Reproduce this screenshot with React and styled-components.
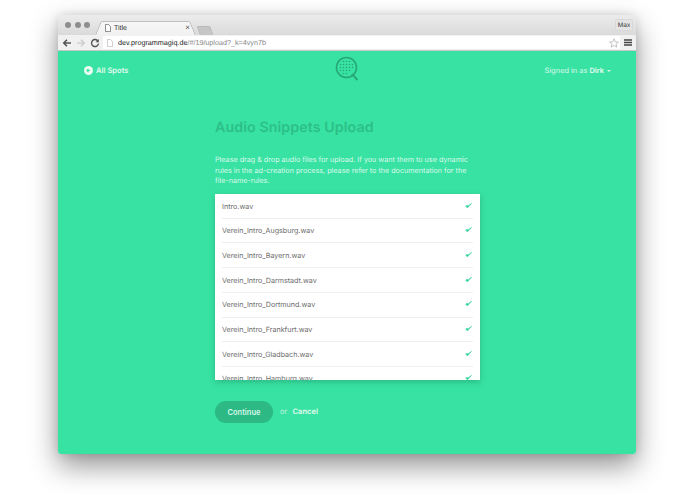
import React from "react";
import styled, { createGlobalStyle } from "styled-components";

const Global = createGlobalStyle`
  html, body { margin: 0; padding: 0; background: #fff; }
  body { font-family: "Inter", "Liberation Sans", sans-serif; overflow: hidden; text-rendering: geometricPrecision; -webkit-font-smoothing: antialiased; }
  * { box-sizing: border-box; }
`;
const Page = styled.div`
  width: 695px; height: 494px; padding: 15px 0 0 58px; background: #fff;
`;
const Window = styled.div`
  width: 578px; height: 439px; display: flex; flex-direction: column;
  border-radius: 4px 4px 3px 3px; overflow: hidden;
  box-shadow: 0 12px 28px rgba(0,0,0,.42), 0 0 10px rgba(0,0,0,.12);
`;
const TabBar = styled.div`
  height: 20px; flex: none; display: flex; align-items: flex-end; padding-left: 7px;
  background: linear-gradient(#ececec, #dadada); position: relative; isolation: isolate;
`;
const Lights = styled.div`
  display: flex; gap: 3.5px; align-self: flex-start; margin-top: 7px; margin-right: 8px;
`;
const Light = styled.span`
  width: 6px; height: 6px; border-radius: 50%; background: #8e8e8e;
`;
const Tab = styled.div`
  width: 95px; height: 14px; position: relative; display: flex; align-items: center; padding: 0 3px 0 7px; gap: 3px;
  font-family: "Liberation Sans", sans-serif; font-size: 7px; color: #333;
  &::before, &::after {
    content: ""; position: absolute; top: 0; bottom: 0; width: 60%; z-index: -1;
    background: linear-gradient(#f6f6f6, #f1f1f1); border-top: 1px solid #c0c0c0;
  }
  &::before { left: 0; border-left: 1px solid #b5b5b5; transform: skewX(-22deg); border-radius: 2px 0 0 0; }
  &::after { right: 0; border-right: 1px solid #b5b5b5; transform: skewX(22deg); border-radius: 0 2px 0 0; }
`;
const TabTitle = styled.span`flex: 1; font-weight: 400;`;
const TabClose = styled.span`font-size: 8px; color: #555; line-height: 1;`;
const NewTab = styled.div`
  width: 14px; height: 9px; margin-left: 5px; background: #c6c6c6;
  border: 1px solid #b9b9b9; border-bottom: none; border-radius: 2px 2px 0 0; transform: skewX(20deg);
`;
const MaxBadge = styled.div`
  position: absolute; right: 3px; top: 4px; width: 18px; height: 12px; border-radius: 2px;
  background: #e4e4e4; border: 1px solid #d8d8d8; font-family: "Liberation Sans", sans-serif;
  font-size: 6.500px; color: #333; display: flex; align-items: center; justify-content: center;
`;
const Toolbar = styled.div`
  height: 16px; flex: none; display: flex; align-items: center; background: #f1f1f1; padding: 0 4px 0 4px;
  border-bottom: 1px solid #c8c8c8;
`;
const NavIcon = styled.svg`width: 10px; height: 10px; margin-right: 4px; flex: none;`;
const AddressBar = styled.div`
  flex: 1; height: 13px; background: #fff; margin-left: -1px; display: flex; align-items: center;
  padding: 0 1px 0 4px; font-family: "Liberation Sans", sans-serif; font-size: 7.200px; color: #888; gap: 5px;
`;
const Url = styled.span`flex: 1; white-space: nowrap;`;
const Host = styled.span`color: #222;`;
const Content = styled.div`
  flex: 1; background: #38e2a2; display: flex; flex-direction: column; min-height: 0;
`;
const Header = styled.header`
  height: 36px; flex: none; display: flex; align-items: center; justify-content: space-between;
  padding: 3px 25px 0 26px; position: relative; color: #d6f8ea;
  font-size: 7.600px; font-weight: 500;
`;
const BackLink = styled.a`display: flex; align-items: center; gap: 3px; color: #e2faf0; font-weight: 600;`;
const BackIcon = styled.svg`width: 9px; height: 9px;`;
const Logo = styled.svg`
  position: absolute; left: 277px; top: 5px; width: 25px; height: 26px;
`;
const Account = styled.div`color: #c5f6e2; display: flex; align-items: center; gap: 2px; font-size: 7.400px;`;
const Strong = styled.b`color: #e8fbf3; font-weight: 600;`;
const Caret = styled.span`
  width: 0; height: 0; border: 2px solid transparent; border-top: 2.500px solid #d6f8ea; margin: 2px 0 0 1px;
`;
const Main = styled.main`
  width: 265px; margin-left: 157px; display: flex; flex-direction: column;
`;
const Title = styled.h1`
  margin: 32px 0 0; font-size: 14.200px; line-height: 18px; font-weight: 600; color: #2cbf88; letter-spacing: .1px; white-space: nowrap;
`;
const Intro = styled.p`
  margin: 18px 0 0; font-size: 7.200px; line-height: 10.700px; color: #d8f9ec; white-space: pre;
`;
const ListCard = styled.div`
  margin-top: 7px; height: 186px; background: #fff; overflow: hidden; padding: 0 7px 0 7px;
  box-shadow: 0 2px 6px rgba(20,110,80,.35);
`;
const Row = styled.div`
  height: 24.700px; flex: none; display: flex; align-items: center; justify-content: space-between;
  border-bottom: 1px solid #efefef; font-size: 7.150px; color: #6d6d6d; padding-right: 1px;
  &:first-child { padding-top: 1px; }
`;
const Check = styled.svg`width: 7px; height: 7px; margin-top: -2px;`;
const Actions = styled.div`
  margin-top: 21px; display: flex; align-items: center; font-size: 7.600px;
`;
const Continue = styled.button`
  width: 58px; height: 22px; border: none; border-radius: 11px; background: #2cb984;
  color: #d6f8ea; font-family: inherit; font-size: 7.500px; font-weight: 600; padding: 1px 0 0;
`;
const Or = styled.span`margin-left: 7px; color: #b8f2dc; margin-top: -1px;`;
const Cancel = styled.a`margin-left: 5px; color: #e2faf0; font-weight: 600; margin-top: -2px;`;

const files = ["Intro.wav","Verein_Intro_Augsburg.wav","Verein_Intro_Bayern.wav","Verein_Intro_Darmstadt.wav","Verein_Intro_Dortmund.wav","Verein_Intro_Frankfurt.wav","Verein_Intro_Gladbach.wav","Verein_Intro_Hamburg.wav"];

export default function App() {
  return (
    <Page>
      <Global />
      <Window>
        <TabBar>
          <Lights><Light /><Light /><Light /></Lights>
          <Tab>
            <svg width="6" height="8" viewBox="0 0 6 8"><path d="M.5.5h3l2 2v5h-5z" fill="#fff" stroke="#666" strokeWidth=".7"/></svg>
            <TabTitle>Title</TabTitle>
            <TabClose>×</TabClose>
          </Tab>
          <NewTab />
          <MaxBadge>Max</MaxBadge>
        </TabBar>
        <Toolbar>
          <NavIcon viewBox="0 0 10 10"><path d="M9 5H2M5 1.800 1.800 5 5 8.200" fill="none" stroke="#555" strokeWidth="1.600"/></NavIcon>
          <NavIcon viewBox="0 0 10 10"><path d="M1 5h7M5 1.800 8.200 5 5 8.200" fill="none" stroke="#cfcfcf" strokeWidth="1.600"/></NavIcon>
          <NavIcon viewBox="0 0 10 10"><path d="M8 3.200A3.500 3.500 0 1 0 8.500 5.500" fill="none" stroke="#555" strokeWidth="1.400"/><path d="M8.800 1v3.200H5.600z" fill="#555"/></NavIcon>
          <AddressBar>
            <svg width="6" height="8" viewBox="0 0 6 8"><path d="M.5.5h3l2 2v5h-5z" fill="#fff" stroke="#bbb" strokeWidth=".7"/></svg>
            <Url><Host>dev.programmagiq.de</Host>/#/19/upload?_k=4vyn7b</Url>
            <svg width="10" height="10" viewBox="0 0 24 24"><path d="m12 2 3 7 7.500.6-5.700 4.900 1.800 7.400L12 18l-6.600 3.900 1.800-7.400L1.500 9.600 9 9z" fill="#fff" stroke="#a8a8a8" strokeWidth="1.600"/></svg>
          </AddressBar>
          <svg width="8" height="7" viewBox="0 0 8 7" style={{ marginLeft: 4 }}><path d="M0 1h8M0 3.500h8M0 6h8" stroke="#444" strokeWidth="1.300"/></svg>
        </Toolbar>
        <Content>
          <Header>
            <BackLink>
              <BackIcon viewBox="0 0 10 10"><circle cx="5" cy="5" r="5" fill="#eafcf4"/><path d="M6.800 5H3.500M5 3.200 3.200 5 5 6.800" fill="none" stroke="#38e2a2" strokeWidth="1.200"/></BackIcon>
              All Spots
            </BackLink>
            <Logo viewBox="0 0 25 26">
              <circle cx="11.500" cy="11.500" r="10" fill="none" stroke="#27a87a" strokeWidth="1.600"/>
              <path d="m17 18 5.500 6" stroke="#27a87a" strokeWidth="2"/>
              {[6,9,12,15,18].flatMap((x)=>[6,9,12,15,18].map((y)=>(
                (x-11.5)**2+(y-11.5)**2<50 ? <circle key={x+"-"+y} cx={x-0.5} cy={y-0.5} r=".8" fill="#27a87a"/> : null
              )))}
            </Logo>
            <Account>Signed in as <Strong>Dirk</Strong><Caret /></Account>
          </Header>
          <Main>
            <Title>Audio Snippets Upload</Title>
            <Intro>{"Please drag & drop audio files for upload. If you want them to use dynamic\nrules in the ad-creation process, please refer to the documentation for the\nfile-name-rules."}</Intro>
            <ListCard>
              {files.map((f)=>(
                <Row key={f}>{f}
                  <Check viewBox="0 0 10 10"><path d="M1 5.800 3.400 8.400 9.500 1.800 4.300 5.800 3 4.600z" fill="#38d69b" stroke="#38d69b" strokeWidth=".8" strokeLinejoin="round"/></Check>
                </Row>
              ))}
            </ListCard>
            <Actions>
              <Continue>Continue</Continue>
              <Or>or</Or>
              <Cancel>Cancel</Cancel>
            </Actions>
          </Main>
        </Content>
      </Window>
    </Page>
  );
}
